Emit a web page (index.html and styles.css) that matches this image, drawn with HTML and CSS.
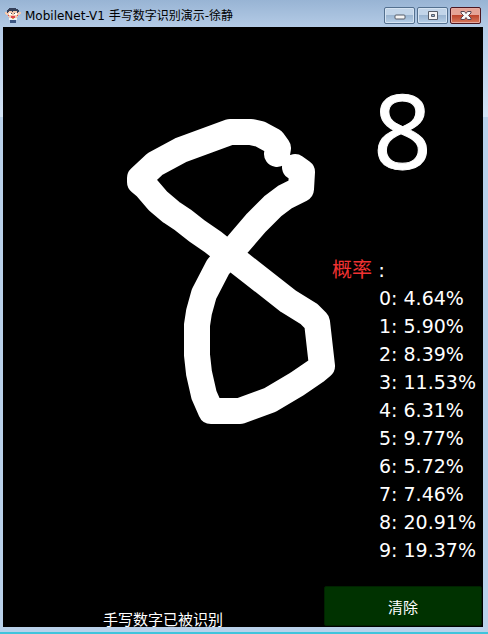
FILE: index.html
```html
<!DOCTYPE html>
<html lang="zh-CN">
<head>
<meta charset="utf-8">
<title>MobileNet-V1 手写数字识别演示-徐静</title>
<link rel="stylesheet" href="styles.css">
</head>
<body>
<div class="window">
  <header class="titlebar">
    <svg class="app-icon" viewBox="0 0 16 16" aria-hidden="true">
      <path fill="#f3c9b0" d="M0 4h3v3H1V6H0zM13 4h3v2h-1v1h-2zM3 3h10v6h-1v1H4V9H3z"/>
      <path fill="#34405a" d="M4 0h7v1h2v1h1v2h-1v1h-1V3H8v1H7V3H4v1H3v1H2V2h1V1h1z"/>
      <path fill="#fff" d="M4 5h3v2H4zM9 5h3v2H9z"/>
      <path fill="#555" d="M6 5h1v1H6zM9 5h1v1H9z"/>
      <path fill="#e0454d" d="M6 8h4v2H6zM3 7h1v1H3zM12 7h1v1h-1z"/>
      <path fill="#f1f3f6" d="M4 10h8v2H4z"/>
      <path fill="#e3a04f" d="M7 10h2v1H7z"/>
      <path fill="#3c5783" d="M5 12h6v3H5z"/>
    </svg>
    <h1 class="title">MobileNet-V1 手写数字识别演示-徐静</h1>
    <div class="controls">
      <button class="control" aria-label="最小化">
        <svg viewBox="0 0 12 10"><rect x="1" y="4" width="10" height="4" rx="1" fill="#f5f5f5" stroke="#565d68"/></svg>
      </button>
      <button class="control" aria-label="最大化">
        <svg viewBox="0 0 12 10"><path d="M1.500 .5h9v8h-9zM4.500 3.500v2h3v-2z" fill="#f5f5f5" fill-rule="evenodd" stroke="#565d68"/></svg>
      </button>
      <button class="control close" aria-label="关闭">
        <svg viewBox="0 0 12 10"><path d="M1 .5h3.500L6 2.500 7.500.5H11v1.500L8.500 4.500 11 7v1.500H7.500L6 6.500 4.500 8.500H1V7l2.500-2.500L1 2z" fill="#f8f8f8" stroke="#5d4650"/></svg>
      </button>
    </div>
  </header>
  <main class="client">
    <section class="drawing">
      <svg class="strokes" viewBox="0 0 320 573" role="img" aria-label="8">
        <g transform="translate(-3 -27)">
          <path d="M277 154L278 148 273 141 260 134 251 132H230L181 150 155 164 140 178V182L146 187 158 201 171 212 183 220 197 231 213 242 228 254 251 272 288 301 309 314 317 322 322 366 316 371 297 384 270 400 240 411H211L204 395 199 373 197 355V325L199 312 204 294 218 267 238 244 256 223 273 206 285 197 301 189 302 172 295 167"/>
        </g>
      </svg>
      <p class="status">手写数字已被识别</p>
    </section>
    <aside class="results">
      <output class="digit">8</output>
      <h2 class="heading"><span class="accent">概率</span> :</h2>
      <ul class="scores">
        <li>0: 4.64%</li>
        <li>1: 5.90%</li>
        <li>2: 8.39%</li>
        <li>3: 11.53%</li>
        <li>4: 6.31%</li>
        <li>5: 9.77%</li>
        <li>6: 5.72%</li>
        <li>7: 7.46%</li>
        <li>8: 20.91%</li>
        <li>9: 19.37%</li>
      </ul>
      <button class="clear">清除</button>
    </aside>
  </main>
</div>
</body>
</html>
```
FILE: styles.css
```css
* {
  box-sizing: border-box;
}

body,
h1,
h2,
p,
ul {
  margin: 0;
  padding: 0;
  font-weight: normal;
}

body {
  font-family: "Noto Sans", "Noto Sans CJK SC", sans-serif;
}

.window {
  display: flex;
  flex-direction: column;
  min-height: 100vh;
  padding: 0 5px 5px 3px;
  border-bottom: 2px solid #40c4dc;
  background: linear-gradient(#98b4d4 0, #b4cbe6 27px, #d3e3f5 117px, #b9d1ea 117px);
}

.titlebar {
  display: flex;
  align-items: center;
  height: 27px;
  padding: 4px 2px 0;
}

.app-icon {
  width: 16px;
  height: 16px;
  margin-right: 4px;
}

.title {
  flex: 1;
  font-family: "DejaVu Sans", "Noto Sans CJK SC", sans-serif;
  font-size: 12px;
  line-height: 16px;
  white-space: nowrap;
  color: #000;
}

.controls {
  display: flex;
  gap: 2px;
}

.control {
  display: flex;
  align-items: center;
  justify-content: center;
  width: 31px;
  height: 17px;
  padding: 0;
  border: 1px solid #53708f;
  border-radius: 2px;
  background: linear-gradient(#c2d5e9 0 45%, #98b3cf 45%, #b7cfe7);
  box-shadow: inset 0 0 0 1px #d5e3f2;
}

.control svg {
  width: 12px;
  height: 10px;
}

.close {
  border-color: #4c1620;
  background: linear-gradient(#e5a396 0 45%, #bb4028 45%, #d67a5e);
  box-shadow: inset 0 0 0 1px #e7aaa0;
}

.client {
  display: grid;
  grid-template-columns: 2fr 1fr;
  flex: 1;
  background: #000;
  color: #fff;
}

.drawing {
  display: flex;
  flex-direction: column;
}

.strokes {
  width: 100%;
  overflow: visible;
}

.strokes path {
  fill: none;
  stroke: #fff;
  stroke-width: 26;
  stroke-linecap: round;
  stroke-linejoin: round;
}

.status {
  margin-top: auto;
  font-size: 15px;
  line-height: 16px;
  text-align: center;
}

.results {
  display: flex;
  flex-direction: column;
}

.digit {
  padding: 38px 0 0 50px;
  font-family: "Open Sans", sans-serif;
  font-size: 103px;
  font-weight: 500;
  line-height: 128px;
  -webkit-text-stroke: 1px #fff;
}

.heading {
  margin-top: 63px;
  padding-left: 9px;
  font-family: "DejaVu Sans", "Noto Sans CJK SC", sans-serif;
  font-size: 20px;
  line-height: 28px;
}

.accent {
  color: #f03232;
}

.scores {
  padding-left: 56px;
  list-style: none;
  font-family: "DejaVu Sans", sans-serif;
  font-size: 19px;
  line-height: 28px;
  white-space: nowrap;
}

.clear {
  height: 40px;
  margin: auto 1px 1px;
  border: 1px solid #002200;
  border-radius: 2px;
  background: #003200;
  color: #fff;
  font-family: inherit;
  font-size: 15px;
}
```
